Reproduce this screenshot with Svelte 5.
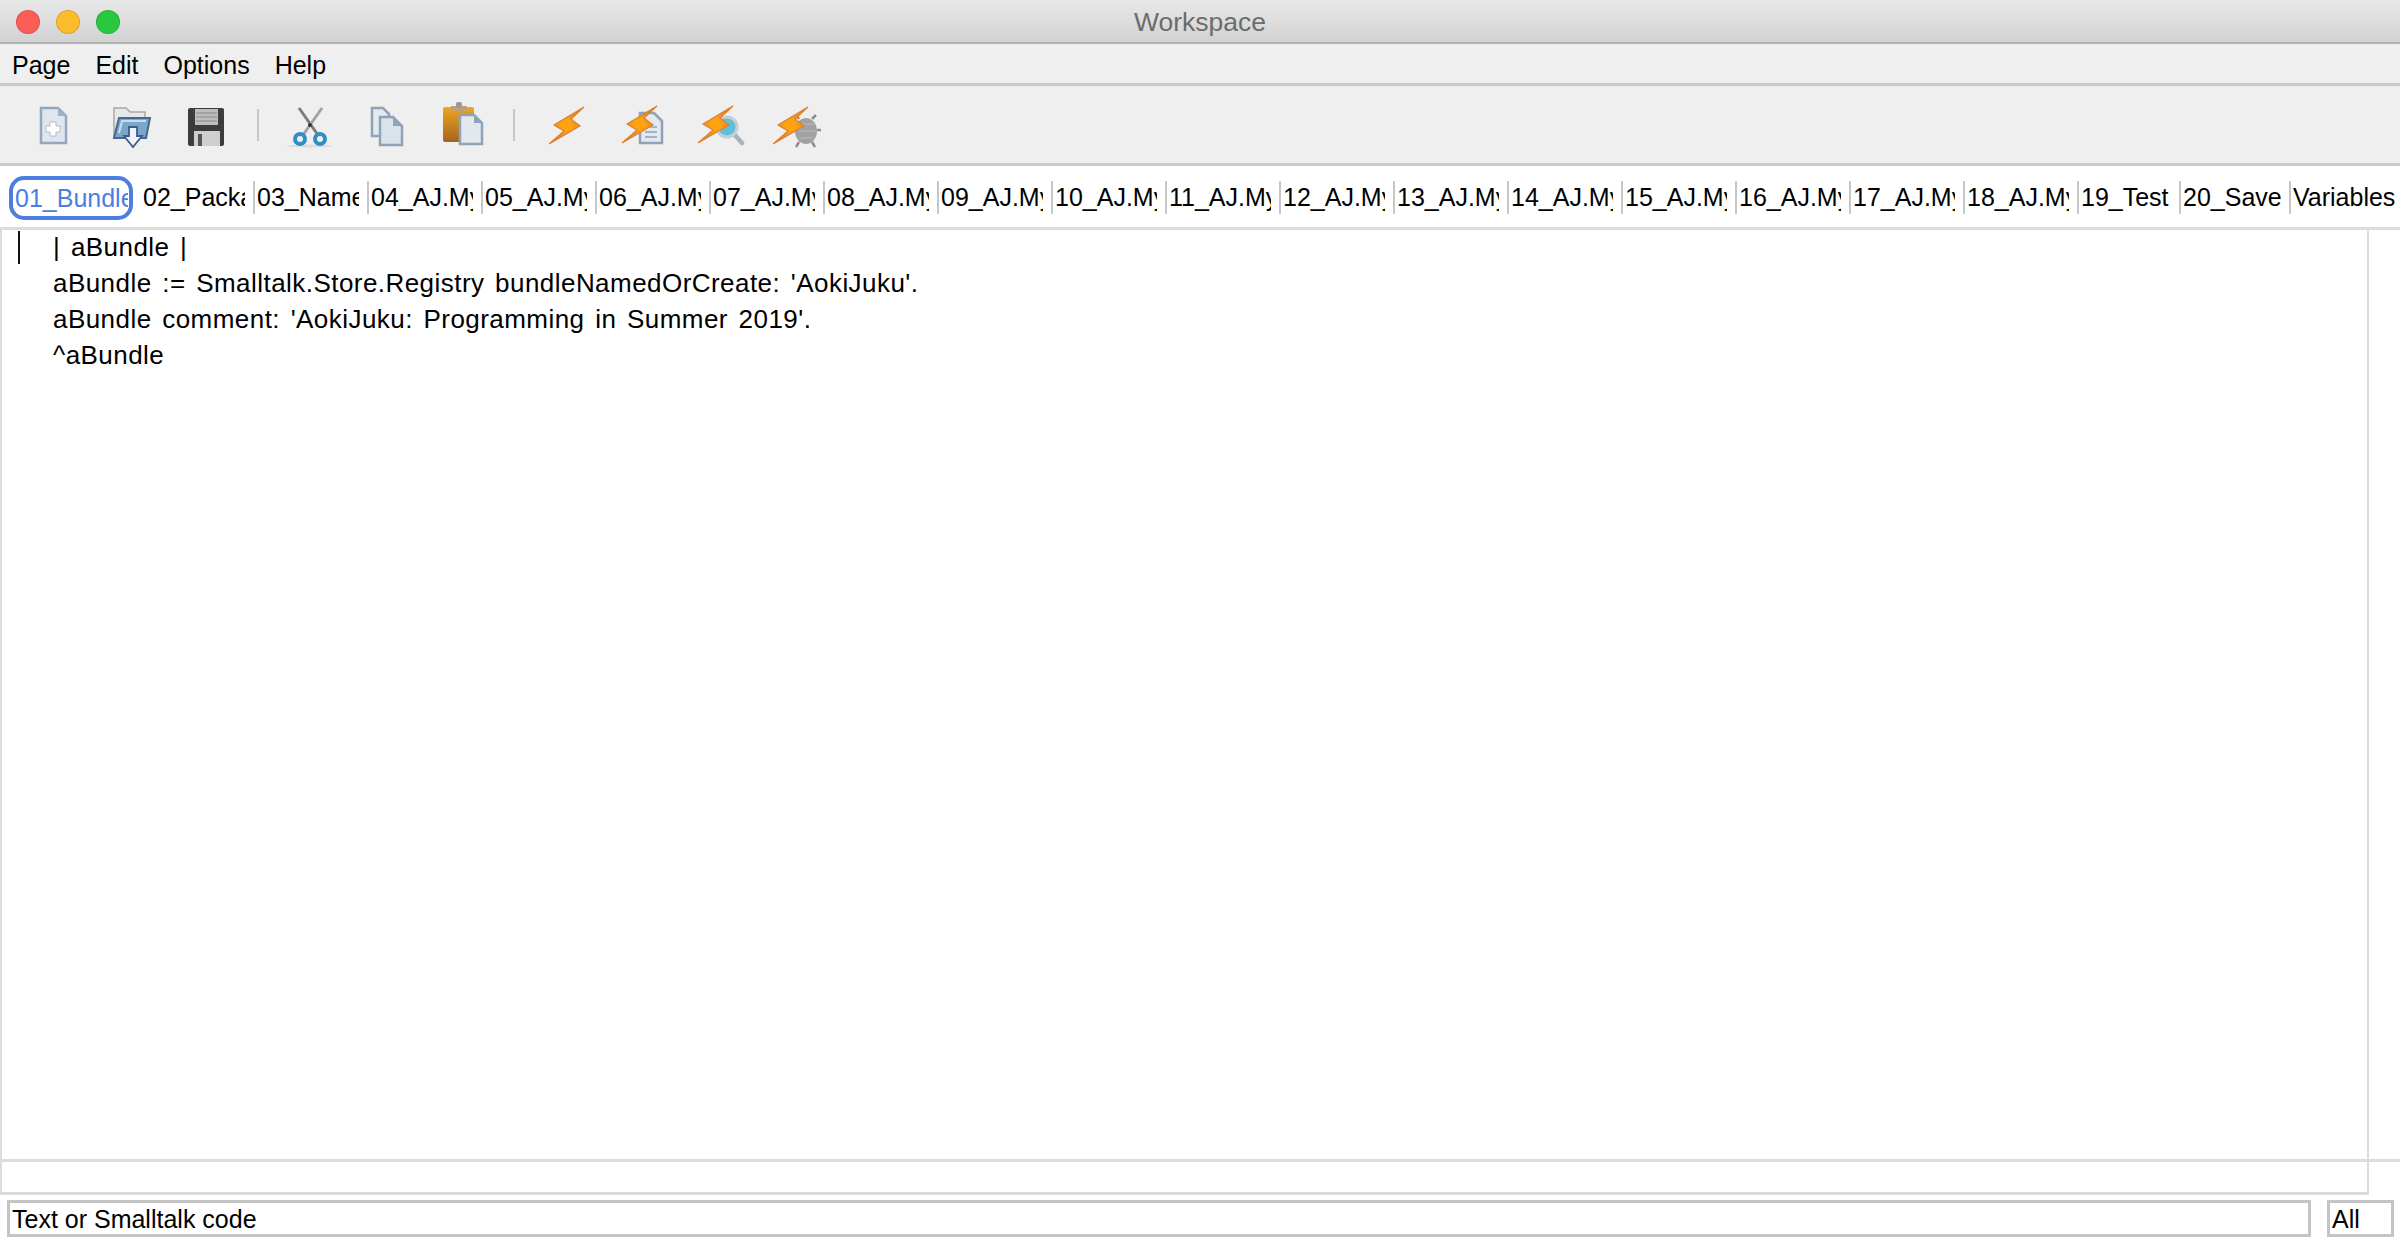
<script>
	let menus = ['Page', 'Edit', 'Options', 'Help'];

	let tabs = ['02_Package', '03_NameSpace'];
	for (let i = 4; i <= 18; i++) {
		tabs.push(String(i).padStart(2, '0') + '_AJ.MyClass');
	}

	let lines = [
		'| aBundle |',
		"aBundle := Smalltalk.Store.Registry bundleNamedOrCreate: 'AokiJuku'.",
		"aBundle comment: 'AokiJuku: Programming in Summer 2019'.",
		'^aBundle',
	];
</script>

<main class="window">
	<header class="titlebar">
		<div class="lights">
			<span class="light red"></span>
			<span class="light yellow"></span>
			<span class="light green"></span>
		</div>
		<div class="title">Workspace</div>
	</header>

	<nav class="menubar">
		{#each menus as menu}
			<span class="menu">{menu}</span>
		{/each}
	</nav>

	<div class="toolbar">
		<!-- icons use window coordinates in their viewBox, 76 wide each -->
		<svg class="icon" viewBox="16 97 76 56">
			<path d="M41 108H58L66 116V143H41Z" fill="#dfe6ed" stroke="#93a8bf" stroke-width="2.5" />
			<path d="M58 108V116H66Z" fill="#9fb2c6" />
			<path d="M50 122H56V126H60V132H56V136H50V132H46V126H50Z" fill="#fff" stroke="#b4bdc6" stroke-width="1" />
		</svg>
		<svg class="icon" viewBox="92 97 76 56">
			<path d="M114 136V108H126L130 112H145V124H122Z" fill="#e8e8e8" stroke="#a8a8a8" stroke-width="1.5" />
			<path d="M114 138L119 118H150L146 138Z" fill="#7ba7cc" stroke="#46678f" stroke-width="2" />
			<path d="M119 133L122 121H146" fill="none" stroke="#c6ddee" stroke-width="2" />
			<path d="M129 127H137V136H142L133 147L124 136H129Z" fill="#eef3f8" stroke="#3e5c8a" stroke-width="1.8" />
		</svg>
		<svg class="icon" viewBox="168 97 76 56">
			<path d="M190 108H222Q224 108 224 110V144Q224 146 222 146H190Q188 146 188 144V110Q188 108 190 108Z" fill="#3c3c3c" />
			<rect x="195" y="109" width="23" height="16" fill="#bdbdbd" />
			<path d="M196 113H217M196 117H217M196 121H217" stroke="#8a8a8a" stroke-width="1.2" />
			<rect x="194" y="131" width="26" height="15" fill="#cfcfcf" />
			<rect x="198" y="134" width="4" height="12" fill="#555" />
		</svg>

		<span class="sep"></span>

		<svg class="icon" viewBox="271 97 76 56">
			<ellipse cx="309" cy="146" rx="23" ry="1.5" fill="#dcdcdc" />
			<path d="M298 108L317 135" stroke="#7b7b7b" stroke-width="3" />
			<path d="M321 108L302 135" stroke="#a4a4a4" stroke-width="3" />
			<circle cx="309" cy="125" r="2" fill="#333" />
			<circle cx="299" cy="139" r="5" fill="#efefef" stroke="#2f8fc4" stroke-width="4" />
			<circle cx="319" cy="139" r="5" fill="#efefef" stroke="#2f8fc4" stroke-width="4" />
		</svg>
		<svg class="icon" viewBox="347 97 76 56">
			<path d="M371 108H382L388 114V136H371Z" fill="#e4e9ef" stroke="#8ea3ba" stroke-width="2.5" />
			<path d="M379 117H392L401 126V145H379Z" fill="#dbe3ea" stroke="#8ea3ba" stroke-width="2.5" />
			<path d="M392 117V126H401Z" fill="#8ea3ba" />
		</svg>
		<svg class="icon" viewBox="423 97 76 56">
			<defs>
				<linearGradient id="amber" x1="0" y1="0" x2="0" y2="1">
					<stop offset="0" stop-color="#eba823" />
					<stop offset="1" stop-color="#a5631c" />
				</linearGradient>
			</defs>
			<rect x="442" y="107" width="31" height="35" rx="2" fill="url(#amber)" />
			<rect x="450" y="106" width="16" height="6" fill="#c0a070" />
			<rect x="455" y="102" width="6" height="6" rx="2" fill="#9a9a94" />
			<path d="M459 115H473L481 123V144H459Z" fill="#e2e8ee" stroke="#8ea3ba" stroke-width="2.5" />
			<path d="M473 115V123H481Z" fill="#8ea3ba" />
		</svg>

		<span class="sep"></span>

		<svg class="icon" viewBox="527 97 76 56">
			<defs>
				<radialGradient id="bolt" cx="0.5" cy="0.5" r="0.55">
					<stop offset="0.25" stop-color="#ffa30f" />
					<stop offset="1" stop-color="#d5793a" />
				</radialGradient>
			</defs>
			<path class="bolt" d="M583 107L553 125L563 131L548 144L579 126L570 119Z" />
		</svg>
		<svg class="icon" viewBox="603 97 76 56">
			<path d="M639 113H653L661 121V143H639Z" fill="#e4e9ef" stroke="#8ea3ba" stroke-width="2.5" />
			<path d="M644 127H656M644 132H656M644 137H656" stroke="#8ea3ba" stroke-width="1.6" />
			<path class="bolt" d="M656 106L626 124L636 130L621 143L652 125L643 118Z" />
		</svg>
		<svg class="icon" viewBox="679 97 76 56">
			<path d="M733 134L741 143" stroke="#a7b4c0" stroke-width="4.5" stroke-linecap="round" />
			<circle cx="726" cy="127" r="10" fill="#5fc0da" stroke="#c4ced6" stroke-width="3" />
			<path class="bolt" d="M732 106L702 124L712 130L697 143L728 125L719 118Z" />
		</svg>
		<svg class="icon" viewBox="755 97 76 56">
			<path d="M798 119L795 115M811 119L815 115M794 131L791 131M816 130L820 130M798 142L795 147M811 142L814 147" stroke="#8e8e8e" stroke-width="2.5" />
			<ellipse cx="805" cy="131" rx="11" ry="13" fill="#a2a2a2" />
			<path d="M798 124H813M797 131H814M798 138H812" stroke="#b4b4b4" stroke-width="1.4" />
			<path class="bolt" d="M807 107L777 125L787 131L772 144L803 126L794 119Z" />
		</svg>
	</div>

	<div class="tabs">
		<div class="tab-active"><span class="label">01_Bundle</span></div>
		{#each tabs as tab, i}
			<div class="tab" class:first={i === 0}><span class="label">{tab}</span></div>
		{/each}
		<div class="tab short test"><span class="label">19_Test</span></div>
		<div class="tab short save"><span class="label">20_Save</span></div>
		<div class="tab short vars"><span class="label">Variables</span></div>
	</div>

	<div class="body">
		<div class="editor">
			<span class="caret"></span>
			<div class="lines">
				{#each lines as line}
					<div class="line">{line}</div>
				{/each}
			</div>
		</div>
		<div class="vscroll"></div>
	</div>

	<div class="hscroll"></div>

	<div class="search">
		<div class="field query">Text or Smalltalk code</div>
		<div class="field scope">All</div>
	</div>
</main>

<style>
	:global(body) {
		background: #fff;
	}

	.window {
		display: flex;
		flex-direction: column;
		height: 1244px;
		overflow: hidden;
		background: #fff;
		color: #000;
		font-family: 'Liberation Sans', Arial, sans-serif;
		font-size: 25px;
	}

	.titlebar {
		position: relative;
		display: flex;
		align-items: center;
		justify-content: center;
		box-sizing: border-box;
		height: 44px;
		padding-top: 3px;
		background: linear-gradient(#e8e8e8, #d2d2d2);
		border-bottom: 2px solid #b2b2b2;
	}

	.lights {
		position: absolute;
		left: 16px;
		top: 10px;
		display: flex;
		gap: 16px;
	}

	.light {
		box-sizing: border-box;
		width: 24px;
		height: 24px;
		border-radius: 50%;
		border: 1px solid rgba(0, 0, 0, 0.12);
	}

	.red { background: #fc5d57; }
	.yellow { background: #fdbb2e; }
	.green { background: #29c83f; }

	.title {
		font-size: 26.5px;
		color: #6c6c6c;
	}

	.menubar {
		display: flex;
		gap: 25px;
		align-items: center;
		box-sizing: border-box;
		height: 42px;
		padding: 4px 0 0 12px;
		background: #efefef;
		border-bottom: 3px solid #c9c9c9;
	}

	.toolbar {
		display: flex;
		align-items: center;
		box-sizing: border-box;
		height: 80px;
		padding-left: 16px;
		background: #efefef;
		border-bottom: 3px solid #c9c9c9;
	}

	.icon {
		width: 76px;
		height: 56px;
		flex: none;
		filter: blur(0.7px);
	}

	.bolt {
		fill: url(#bolt);
		stroke: #dc8231;
		stroke-width: 1.2;
	}

	.sep {
		flex: none;
		width: 2px;
		height: 32px;
		margin: 0 13px;
		background: #c6c6c6;
	}

	.tabs {
		display: flex;
		align-items: center;
		box-sizing: border-box;
		height: 64px;
		padding-top: 2px;
		border-bottom: 3px solid #dcdcdc;
		white-space: nowrap;
	}

	.tab-active {
		box-sizing: border-box;
		flex: none;
		width: 124px;
		height: 44px;
		margin: 0 6px 0 9px;
		padding-left: 2px;
		border: 4px solid #4c7ee2;
		border-radius: 15px;
		color: #4c7ee2;
		line-height: 36px;
		overflow: hidden;
	}

	.tab {
		box-sizing: border-box;
		flex: none;
		width: 114px;
		height: 33px;
		padding-left: 2px;
		border-left: 2px solid #c6c6c6;
		line-height: 33px;
	}

	.tab.first {
		border-left-color: transparent;
	}

	.tab.test { width: 102px; }
	.tab.save { width: 110px; }
	.tab.vars { width: 111px; }

	.label {
		display: block;
		width: 102px;
		overflow: hidden;
	}

	.tab-active .label {
		width: 113px;
	}

	.tab.vars .label {
		width: 108px;
	}

	.body {
		flex: 1;
		display: flex;
		min-height: 0;
		border-bottom: 3px solid #dcdcdc;
	}

	.editor {
		position: relative;
		flex: 1;
		box-sizing: border-box;
		padding-left: 51px;
		border-left: 2px solid #dcdcdc;
		font-size: 26px;
		letter-spacing: 0.45px;
		word-spacing: 3px;
	}

	.lines {
		margin-top: -1px;
	}

	.line {
		height: 36px;
		line-height: 36px;
		white-space: pre;
	}

	.caret {
		position: absolute;
		left: 16px;
		top: 1px;
		width: 2px;
		height: 33px;
		background: #111;
	}

	.vscroll {
		flex: none;
		box-sizing: border-box;
		width: 33px;
		border-left: 2px solid #dcdcdc;
	}

	.hscroll {
		box-sizing: border-box;
		flex: none;
		width: 2369px;
		height: 33px;
		border-left: 2px solid #dcdcdc;
		border-right: 2px solid #dcdcdc;
		border-bottom: 3px solid #dcdcdc;
	}

	.search {
		flex: none;
		display: flex;
		gap: 16px;
		height: 49px;
		padding: 5px 0 0 7px;
		box-sizing: border-box;
	}

	.field {
		box-sizing: border-box;
		height: 37px;
		padding-left: 2px;
		border: 3px solid #c4c4c4;
		line-height: 33px;
	}

	.query { width: 2304px; }
	.scope { width: 67px; }
</style>
